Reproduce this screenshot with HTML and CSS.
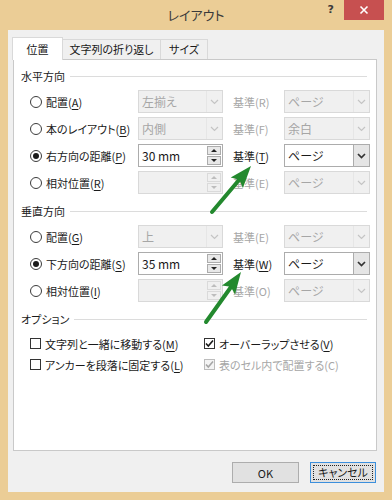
FILE: index.html
```html
<!DOCTYPE html>
<html lang="ja">
<head>
  <meta charset="UTF-8" />
  <title>レイアウト</title>
  <link rel="stylesheet" href="styles.css">
</head>
<body>
  <div class="window">
    <div class="titlebar">
      <span></span>
      <div class="title">レイアウト</div>
      <div class="controls">
        <span class="help">?</span>
        <span class="close">
          <svg width="10" height="10" viewBox="0 0 10 10"><path d="M1.5 1.5l7 7M8.5 1.5l-7 7" stroke="#fff" stroke-width="1.6" fill="none"/></svg>
        </span>
      </div>
    </div>

    <div class="client">
      <div class="tabs">
        <div class="tab active">位置</div>
        <div class="tab">文字列の折り返し</div>
        <div class="tab">サイズ</div>
      </div>

      <div class="panel">
        <div class="group-head"><span>水平方向</span><i></i></div>
        <div class="rows">
          <label class="radio"><span class="dot"></span><span>配置(<u>A</u>)</span></label>
          <div class="box disabled"><span class="val">左揃え</span><span class="drop"><svg width="9" height="6" viewBox="0 0 9 6"><path d="M1 1l3.5 3.5L8 1" /></svg></span></div>
          <span class="ref disabled">基準(R)</span>
          <div class="box disabled"><span class="val">ページ</span><span class="drop"><svg width="9" height="6" viewBox="0 0 9 6"><path d="M1 1l3.5 3.5L8 1" /></svg></span></div>

          <label class="radio"><span class="dot"></span><span>本のレイアウト(<u>B</u>)</span></label>
          <div class="box disabled"><span class="val">内側</span><span class="drop"><svg width="9" height="6" viewBox="0 0 9 6"><path d="M1 1l3.5 3.5L8 1" /></svg></span></div>
          <span class="ref disabled">基準(F)</span>
          <div class="box disabled"><span class="val">余白</span><span class="drop"><svg width="9" height="6" viewBox="0 0 9 6"><path d="M1 1l3.5 3.5L8 1" /></svg></span></div>

          <label class="radio"><span class="dot checked"></span><span>右方向の距離(<u>P</u>)</span></label>
          <div class="box"><span class="val">30 mm</span><span class="spin"><b><em class="up"></em></b><b><em class="down"></em></b></span></div>
          <span class="ref">基準(<u>T</u>)</span>
          <div class="box"><span class="val">ページ</span><span class="drop"><svg width="9" height="6" viewBox="0 0 9 6"><path d="M1 1l3.5 3.5L8 1" /></svg></span></div>

          <label class="radio"><span class="dot"></span><span>相対位置(<u>R</u>)</span></label>
          <div class="box disabled"><span class="val"></span><span class="spin"><b><em class="up"></em></b><b><em class="down"></em></b></span></div>
          <span class="ref disabled">基準(E)</span>
          <div class="box disabled"><span class="val">ページ</span><span class="drop"><svg width="9" height="6" viewBox="0 0 9 6"><path d="M1 1l3.5 3.5L8 1" /></svg></span></div>
        </div>

        <div class="group-head second"><span>垂直方向</span><i></i></div>
        <div class="rows">
          <label class="radio"><span class="dot"></span><span>配置(<u>G</u>)</span></label>
          <div class="box disabled"><span class="val">上</span><span class="drop"><svg width="9" height="6" viewBox="0 0 9 6"><path d="M1 1l3.5 3.5L8 1" /></svg></span></div>
          <span class="ref disabled">基準(E)</span>
          <div class="box disabled"><span class="val">ページ</span><span class="drop"><svg width="9" height="6" viewBox="0 0 9 6"><path d="M1 1l3.5 3.5L8 1" /></svg></span></div>

          <label class="radio"><span class="dot checked"></span><span>下方向の距離(<u>S</u>)</span></label>
          <div class="box"><span class="val">35 mm</span><span class="spin"><b><em class="up"></em></b><b><em class="down"></em></b></span></div>
          <span class="ref">基準(<u>W</u>)</span>
          <div class="box"><span class="val">ページ</span><span class="drop"><svg width="9" height="6" viewBox="0 0 9 6"><path d="M1 1l3.5 3.5L8 1" /></svg></span></div>

          <label class="radio"><span class="dot"></span><span>相対位置(<u>I</u>)</span></label>
          <div class="box disabled"><span class="val"></span><span class="spin"><b><em class="up"></em></b><b><em class="down"></em></b></span></div>
          <span class="ref disabled">基準(O)</span>
          <div class="box disabled"><span class="val">ページ</span><span class="drop"><svg width="9" height="6" viewBox="0 0 9 6"><path d="M1 1l3.5 3.5L8 1" /></svg></span></div>
        </div>

        <div class="group-head second"><span>オプション</span><i></i></div>
        <div class="checks">
          <label class="check"><span class="cb"></span><span>文字列と一緒に移動する(<u>M</u>)</span></label>
          <label class="check"><span class="cb"><svg width="9" height="9" viewBox="0 0 9 9"><path d="M1 4.5l2.3 2.5L8 1.5" /></svg></span><span>オーバーラップさせる(<u>V</u>)</span></label>
          <label class="check"><span class="cb"></span><span>アンカーを段落に固定する(<u>L</u>)</span></label>
          <label class="check disabled"><span class="cb"><svg width="9" height="9" viewBox="0 0 9 9"><path d="M1 4.5l2.3 2.5L8 1.5" /></svg></span><span>表のセル内で配置する(C)</span></label>
        </div>
      </div>

      <div class="buttons">
        <button class="btn">OK</button>
        <button class="btn default"><span>キャンセル</span></button>
      </div>
    </div>

    <!-- green pointer arrows drawn over the dialog -->
    <svg class="arrows" width="392" height="500" viewBox="0 0 392 500">
      <line x1="212" y1="212" x2="239" y2="180" />
      <polygon points="251,166 242.9,188 239.4,179.7 230.7,177.6" />
      <line x1="206" y1="322" x2="231" y2="287" />
      <polygon points="241,272 235,294.6 230.7,286.7 221.9,285.4" />
    </svg>
  </div>
</body>
</html>
```

FILE: styles.css
```css
* {
  box-sizing: border-box;
}

body {
  margin: 0;
  font-family: "Noto Sans CJK JP", "Noto Sans", sans-serif;
  font-size: 11px;
  color: #1a1a1a;
  font-feature-settings: "palt";
}

.window {
  position: relative;
  width: 392px;
  height: 500px;
  background: #ebcd96;
  padding: 0 8px 8px;
  display: flex;
  flex-direction: column;
}

.titlebar {
  height: 30px;
  display: grid;
  grid-template-columns: 1fr auto 1fr;
}

.title {
  line-height: 30px;
  font-size: 13px;
  color: #3a3a3a;
}

.controls {
  justify-self: end;
  display: flex;
  align-items: flex-start;
}

.help {
  font-family: "DejaVu Sans", sans-serif;
  font-weight: bold;
  font-size: 11px;
  line-height: 20px;
  color: #3a3a3a;
  margin-right: 10px;
}

.close {
  width: 40px;
  height: 20px;
  background: #c75050;
  display: flex;
  align-items: center;
  justify-content: center;
}

.client {
  flex: 1;
  background: #f0f0f0;
  padding: 7px 7px 0 5px;
  display: flex;
  flex-direction: column;
}

/* tabs */
.tabs {
  display: flex;
  align-items: flex-end;
  height: 22px;
}

.tab {
  height: 20px;
  line-height: 18px;
  border: 1px solid #d9d9d9;
  border-bottom: none;
  background: #f0f0f0;
  text-align: center;
}

.tab + .tab {
  border-left: none;
}

.tab:nth-child(1) {
  width: 51px;
  margin-left: -1px;
}

.tab:nth-child(2) {
  width: 98px;
}

.tab:nth-child(3) {
  width: 47px;
}

.tab.active {
  height: 23px;
  line-height: 22px;
  margin-bottom: -1px;
  background: #fff;
  position: relative;
  z-index: 1;
}

.panel {
  width: 364px;
  height: 392px;
  background: #fff;
  border: 1px solid #c9c9c9;
  padding: 8px 9px 0 7px;
}

.group-head {
  display: flex;
  align-items: center;
  gap: 5px;
  height: 16px;
  line-height: 16px;
}

.group-head i {
  flex: 1;
  border-top: 1px solid #dcdcdc;
  margin-top: 1px;
}

.group-head.second {
  margin-top: 9px;
}

.rows {
  margin-top: 6px;
  padding-left: 9px;
  display: grid;
  grid-template-columns: 108px 85px 61px 86px;
  grid-auto-rows: 23px;
  row-gap: 4px;
  align-items: center;
}

.radio {
  display: flex;
  align-items: center;
  gap: 4px;
  white-space: nowrap;
}

.dot {
  flex: none;
  width: 12px;
  height: 12px;
  border: 1px solid #3c3c3c;
  border-radius: 50%;
  background: #fff;
  display: flex;
  align-items: center;
  justify-content: center;
}

.dot.checked::after {
  content: "";
  width: 6px;
  height: 6px;
  border-radius: 50%;
  background: #1a1a1a;
}

u {
  text-decoration-thickness: 1px;
  text-underline-offset: 2px;
}

.ref {
  padding-left: 10px;
  white-space: nowrap;
}

.disabled,
.disabled .val {
  color: #a6a6a6;
}

.box {
  height: 23px;
  border: 1px solid #acacac;
  background: #fff;
  display: flex;
}

.box.disabled {
  border-color: #d9d9d9;
  background: #f0f0f0;
}

.val {
  flex: 1;
  padding-left: 3px;
  line-height: 21px;
  font-size: 12px;
  white-space: nowrap;
  overflow: hidden;
}

.drop {
  width: 16px;
  border-left: 1px solid #acacac;
  background: #e5e5e5;
  display: flex;
  align-items: center;
  justify-content: center;
}

.drop svg path {
  fill: none;
  stroke: #333;
  stroke-width: 1.7;
}

.box.disabled .drop {
  border-left-color: #e6e6e6;
  background: #f0f0f0;
}

.box.disabled .drop svg path {
  stroke: #c4c4c4;
  stroke-width: 1.2;
}

.spin {
  width: 15px;
  padding: 1px 1px 1px 0;
  display: flex;
  flex-direction: column;
  gap: 1px;
}

.spin b {
  flex: 1;
  border: 1px solid #acacac;
  background: #e8e8e8;
  display: flex;
  align-items: center;
  justify-content: center;
}

.box.disabled .spin b {
  border-color: #dadada;
  background: #f0f0f0;
}

.up {
  border-left: 3px solid transparent;
  border-right: 3px solid transparent;
  border-bottom: 3px solid #222;
}

.down {
  border-left: 3px solid transparent;
  border-right: 3px solid transparent;
  border-top: 3px solid #222;
}

.box.disabled .up {
  border-bottom-color: #bdbdbd;
}

.box.disabled .down {
  border-top-color: #bdbdbd;
}

/* options */
.checks {
  margin-top: 8px;
  padding-left: 9px;
  display: grid;
  grid-template-columns: 174px 1fr;
  grid-auto-rows: 17px;
  row-gap: 4px;
  align-items: center;
}

.check {
  display: flex;
  align-items: center;
  gap: 4px;
  white-space: nowrap;
}

.cb {
  flex: none;
  width: 11px;
  height: 11px;
  border: 1px solid #333;
  background: #fff;
  display: flex;
  align-items: center;
  justify-content: center;
}

.cb svg path {
  fill: none;
  stroke: #1a1a1a;
  stroke-width: 1.6;
}

.check.disabled .cb {
  border-color: #bcbcbc;
  background: #f4f4f4;
}

.check.disabled .cb svg path {
  stroke: #a6a6a6;
}

/* buttons */
.buttons {
  display: flex;
  justify-content: flex-end;
  gap: 11px;
  padding: 11px 1px 0 0;
}

.btn {
  width: 67px;
  height: 21px;
  padding: 0;
  border: 1px solid #adadad;
  background: #e1e1e1;
  font: inherit;
  color: #1a1a1a;
}

.btn.default {
  width: 66px;
  border-color: #3c8fdc;
  padding: 2px;
}

.btn.default span {
  display: block;
  height: 100%;
  line-height: 13px;
  border: 1px dotted #222;
}

.arrows {
  position: absolute;
  top: 0;
  left: 0;
  pointer-events: none;
}

.arrows line {
  stroke: #23892e;
  stroke-width: 4;
  stroke-linecap: round;
}

.arrows polygon {
  fill: #23892e;
}
```
